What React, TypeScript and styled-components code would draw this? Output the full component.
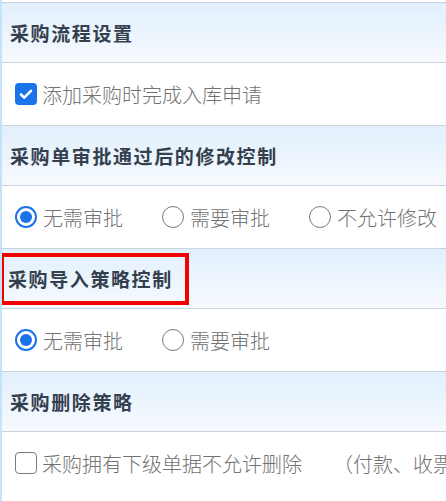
import React from "react";
import styled, { createGlobalStyle, css } from "styled-components";

const GlobalStyle = createGlobalStyle`
  html, body {
    margin: 0;
    padding: 0;
    background: #fff;
    font-family: "Noto Sans CJK SC", "Noto Sans", sans-serif;
  }
`

const Page = styled.div`
  width: 446px;
  height: 501px;
  overflow: hidden;
  padding-top: 2px;
  box-sizing: border-box;
  border-left: 2px solid #c4e2f8;
`

const Section = styled.section`
  border-top: 1px solid #c9d3dd;
`

const Header = styled.div`
  height: 59px;
  display: flex;
  align-items: center;
  padding-left: 8px;
  background: linear-gradient(to bottom, #e1effc, #f6fafe);
  border-bottom: 1px solid #c9d3dd;
`

const Title = styled.span<{ $highlight?: boolean }>`
  font-size: 19px;
  font-weight: 700;
  letter-spacing: 1.6px;
  line-height: 24px;
  color: #34404e;
  white-space: nowrap;

  ${(p) =>
    p.$highlight &&
    css`
      border: 4px solid #f50000;
      padding: 10px 12px 10px 4px;
      margin-left: -10px;
    `}
`

const Body = styled.div`
  height: 62px;
  display: flex;
  align-items: center;
  padding-left: 13px;
  background: #fff;
  overflow: hidden;
  white-space: nowrap;
`

const Option = styled.label`
  display: flex;
  align-items: center;
  margin-right: 39px;
  font-size: 20px;
  font-weight: 300;
  color: #727272;
  flex-shrink: 0;
`

const Note = styled.span`
  font-size: 20px;
  font-weight: 300;
  color: #727272;
  margin-left: -8px;
  flex-shrink: 0;
`

const Box = styled.span<{ $checked?: boolean }>`
  width: 22px;
  height: 22px;
  box-sizing: border-box;
  border-radius: 4px;
  margin-right: 5px;
  display: inline-flex;
  align-items: center;
  justify-content: center;
  border: ${(p) => (p.$checked ? "none" : "1.5px solid #7a7a7a")};
  background: ${(p) => (p.$checked ? "#1a73e8" : "#fff")};
`

const Ring = styled.span<{ $checked?: boolean }>`
  width: 22px;
  height: 22px;
  box-sizing: border-box;
  border-radius: 50%;
  margin-right: 6px;
  display: inline-flex;
  align-items: center;
  justify-content: center;
  border: ${(p) => (p.$checked ? "2px solid #1a73e8" : "1.5px solid #7a7a7a")};
  background: #fff;

  &::after {
    content: "";
    display: ${(p) => (p.$checked ? "block" : "none")};
    width: 12px;
    height: 12px;
    border-radius: 50%;
    background: #1a73e8;
  }
`

function Checkbox({ checked, label }: { checked?: boolean; label: string }) {
  return (
    <Option>
      <Box $checked={checked}>
        {checked && (
          <svg width="16" height="16" viewBox="0 0 16 16">
            <path d="M3 8.5l3.2 3.2L13 4.8" fill="none" stroke="#fff" strokeWidth="2.6" strokeLinecap="round" strokeLinejoin="round" />
          </svg>
        )}
      </Box>
      {label}
    </Option>
  );
}

function Radio({ checked, label }: { checked?: boolean; label: string }) {
  return (
    <Option>
      <Ring $checked={checked} />
      {label}
    </Option>
  );
}

export default function App() {
  return (
    <Page>
      <GlobalStyle />
      <Section>
        <Header><Title>采购流程设置</Title></Header>
        <Body>
          <Checkbox checked label="添加采购时完成入库申请" />
        </Body>
      </Section>
      <Section>
        <Header><Title>采购单审批通过后的修改控制</Title></Header>
        <Body>
          <Radio checked label="无需审批" />
          <Radio label="需要审批" />
          <Radio label="不允许修改" />
        </Body>
      </Section>
      <Section>
        <Header><Title $highlight>采购导入策略控制</Title></Header>
        <Body>
          <Radio checked label="无需审批" />
          <Radio label="需要审批" />
        </Body>
      </Section>
      <Section>
        <Header><Title>采购删除策略</Title></Header>
        <Body>
          <Checkbox label="采购拥有下级单据不允许删除" />
          <Note>（付款、收票、入库单据）</Note>
        </Body>
      </Section>
    </Page>
  );
}
